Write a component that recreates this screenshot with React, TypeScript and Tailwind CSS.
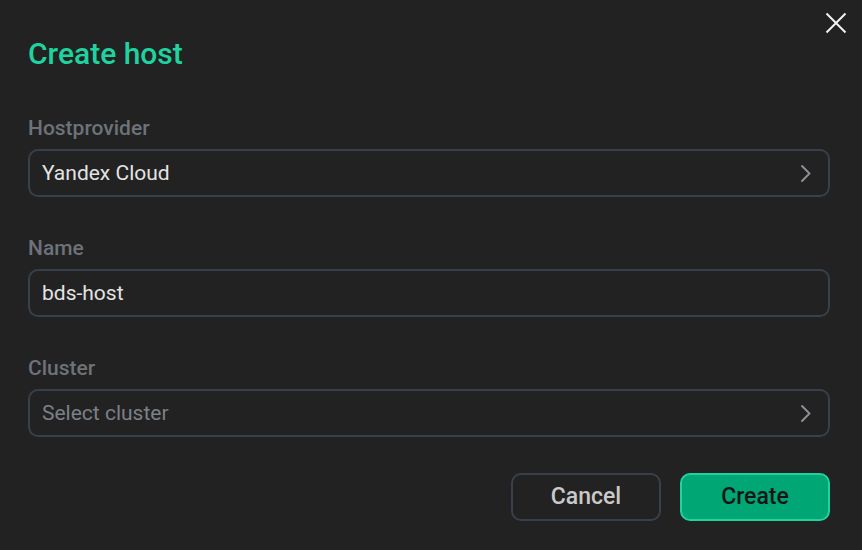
import React from "react";

function Chevron() {
  return (
    <svg width="12" height="19" viewBox="0 0 12 19" fill="none" className="shrink-0">
      <path d="M2 2 L9.5 9.5 L2 17" stroke="#8b9097" strokeWidth="2" strokeLinecap="round" strokeLinejoin="round" />
    </svg>
  );
}

function Field({ label, value, placeholder, chevron }: { label: string; value?: string; placeholder?: string; chevron?: boolean }) {
  return (
    <div className="flex flex-col gap-[7px]">
      <div className="text-[21px] leading-[28px] font-medium text-[#6e7279]">{label}</div>
      <div className="h-[48px] rounded-[10px] border-2 border-[#38404b] flex items-center pl-[12px] pr-[16px] justify-between">
        <span className={"text-[21px] leading-[28px] " + (value ? "text-[#e3e3e3]" : "text-[#7c8087]")}>
          {value ?? placeholder}
        </span>
        {chevron && <Chevron />}
      </div>
    </div>
  );
}

export default function App() {
  return (
    <div
      className="w-[862px] h-[550px] bg-[#222222] relative pl-[28px] pr-[32px] pt-[36px] flex flex-col"
      style={{ fontFamily: "Roboto, 'Noto Sans', sans-serif" }}
    >
      <button className="absolute top-[12px] right-[15px] w-[22px] h-[22px] flex items-center justify-center">
        <svg width="22" height="22" viewBox="0 0 22 22" fill="none">
          <path d="M1.5 1.5 L20.5 20.5 M20.5 1.5 L1.5 20.5" stroke="#f2f2f2" strokeWidth="2" />
        </svg>
      </button>
      <div className="text-[30px] leading-[36px] font-medium text-[#1fd3a0]">Create host</div>
      <div className="mt-[42px] flex flex-col gap-[37px]">
        <Field label="Hostprovider" value="Yandex Cloud" chevron />
        <Field label="Name" value="bds-host" />
        <Field label="Cluster" placeholder="Select cluster" chevron />
      </div>
      <div className="mt-[36px] flex justify-end gap-[19px]">
        <button className="w-[150px] h-[48px] rounded-[10px] border-2 border-[#38404b] text-[23px] font-medium text-[#c9c9c9]">
          Cancel
        </button>
        <button className="w-[150px] h-[48px] rounded-[10px] border-2 border-[#1fd3a0] bg-[#00a673] text-[23px] font-medium text-[#161616]">
          Create
        </button>
      </div>
    </div>
  );
}
